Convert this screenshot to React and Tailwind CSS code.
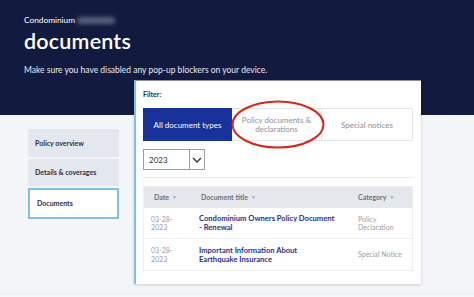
import React from "react";

export default function App() {
  return (
    <div className="w-[474px] h-[297px] overflow-hidden bg-[#f3f5f9]" style={{ fontFamily: "Lato, 'Open Sans', sans-serif" }}>
      <div className="h-[115px] bg-[#121b3f] pl-[24px] pt-[15px] text-white">
        <div className="flex items-center h-[10px] text-[8.3px] leading-[10px]">
          <span>Condominium</span>
          <span className="ml-[2px] inline-block w-[38px] h-[7px] rounded-full bg-[#5a6180] blur-[2px]"></span>
        </div>
        <div className="mt-[4px] text-[21.5px] leading-[24px] font-semibold tracking-[0.2px]">documents</div>
        <div className="mt-[12px] text-[8.5px] leading-[10px] text-[#e6e8ef]">Make sure you have disabled any pop-up blockers on your device.</div>
      </div>
      <div className="flex pl-[28px]">
        <div className="w-[91px] mt-[14px] flex flex-col gap-[2px]">
          <div className="h-[28px] bg-[#e4e8ee] flex items-center pl-[7px] text-[7px] font-bold text-[#2a2f45]">Policy overview</div>
          <div className="h-[27px] bg-[#e4e8ee] flex items-center pl-[7px] text-[7px] font-bold text-[#2a2f45]">Details &amp; coverages</div>
          <div className="h-[31px] bg-white border-2 border-[#7ec1e7] flex items-center pl-[7px] text-[7px] font-bold text-[#2a2f45]">Documents</div>
        </div>
        <div className="ml-[15px] mt-[-35px] w-[287px] h-[204px] bg-white border-l-2 border-[#7ec1e7] border-t border-t-[#8a8fa0] shadow-[0_1px_3px_rgba(0,0,0,0.18)] pl-[7px] pr-[8px] pt-[9px]">
          <div className="text-[7px] leading-[8px] font-bold text-[#2a2f45]">Filter:</div>
          <div className="relative mt-[10px] flex h-[33px]">
            <div className="w-[89px] bg-[#19319a] flex items-center justify-center text-[8px] text-white">All document types</div>
            <div className="w-[90px] border border-[#e3e6ea] border-l-0 flex items-center justify-center text-center text-[8px] leading-[9px] text-[#8b8f9c]">Policy documents &amp;<br />declarations</div>
            <div className="w-[91px] border border-[#e3e6ea] border-l-0 flex items-center justify-center text-[8px] text-[#8b8f9c]">Special notices</div>
            <svg className="absolute left-[88px] top-[-8px]" width="94" height="50" viewBox="0 0 94 50">
              <ellipse cx="47" cy="24.5" rx="45.5" ry="23" fill="none" stroke="#d7261b" strokeWidth="2" />
            </svg>
          </div>
          <div className="mt-[8px] flex w-[62px] h-[21px] border border-[#9a9ea8]">
            <div className="w-[45px] flex items-center pl-[5px] text-[8px] text-[#2a2f45]">2023</div>
            <div className="flex-1 border-l border-[#9a9ea8] flex items-center justify-center">
              <svg width="10" height="6" viewBox="0 0 10 6"><path d="M1 1l4 4 4-4" fill="none" stroke="#2a2f45" strokeWidth="1.3" /></svg>
            </div>
          </div>
          <div className="mt-[7px] h-px bg-[#e8eaee]"></div>
          <div className="mt-[8px] w-[270px] border border-[#eceef1]">
            <div className="h-[21px] bg-[#e4e7eb] flex items-center text-[7px] font-bold text-[#6b7080]">
              <div className="w-[55px] pl-[10px] flex items-center gap-[3px]">Date<span className="text-[5px] text-[#a3a7b1]">▼</span></div>
              <div className="w-[159px] pl-[2px] flex items-center gap-[3px]">Document title<span className="text-[5px] text-[#a3a7b1]">▼</span></div>
              <div className="flex-1 flex items-center gap-[3px]">Category<span className="text-[5px] text-[#a3a7b1]">▼</span></div>
            </div>
            <div className="h-[31px] flex items-center border-b border-[#eceef1] text-[7px] leading-[8.5px]">
              <div className="w-[55px] pl-[7px] text-[#9a9ea8]">03-28-<br />2023</div>
              <div className="w-[159px] font-bold text-[7.6px] leading-[9px] text-[#1f3186]">Condominium Owners Policy Document<br />- Renewal</div>
              <div className="flex-1 text-[#9a9ea8]">Policy<br />Declaration</div>
            </div>
            <div className="h-[31px] flex items-center text-[7px] leading-[8.5px]">
              <div className="w-[55px] pl-[7px] text-[#9a9ea8]">03-28-<br />2023</div>
              <div className="w-[159px] font-bold text-[7.6px] leading-[9px] text-[#1f3186]">Important Information About<br />Earthquake Insurance</div>
              <div className="flex-1 text-[#9a9ea8]">Special Notice</div>
            </div>
          </div>
        </div>
      </div>
      <div className="mt-[9px] h-[10px] border-t border-[#e9ecf1] bg-[#f5f6f9]"></div>
    </div>
  );
}
